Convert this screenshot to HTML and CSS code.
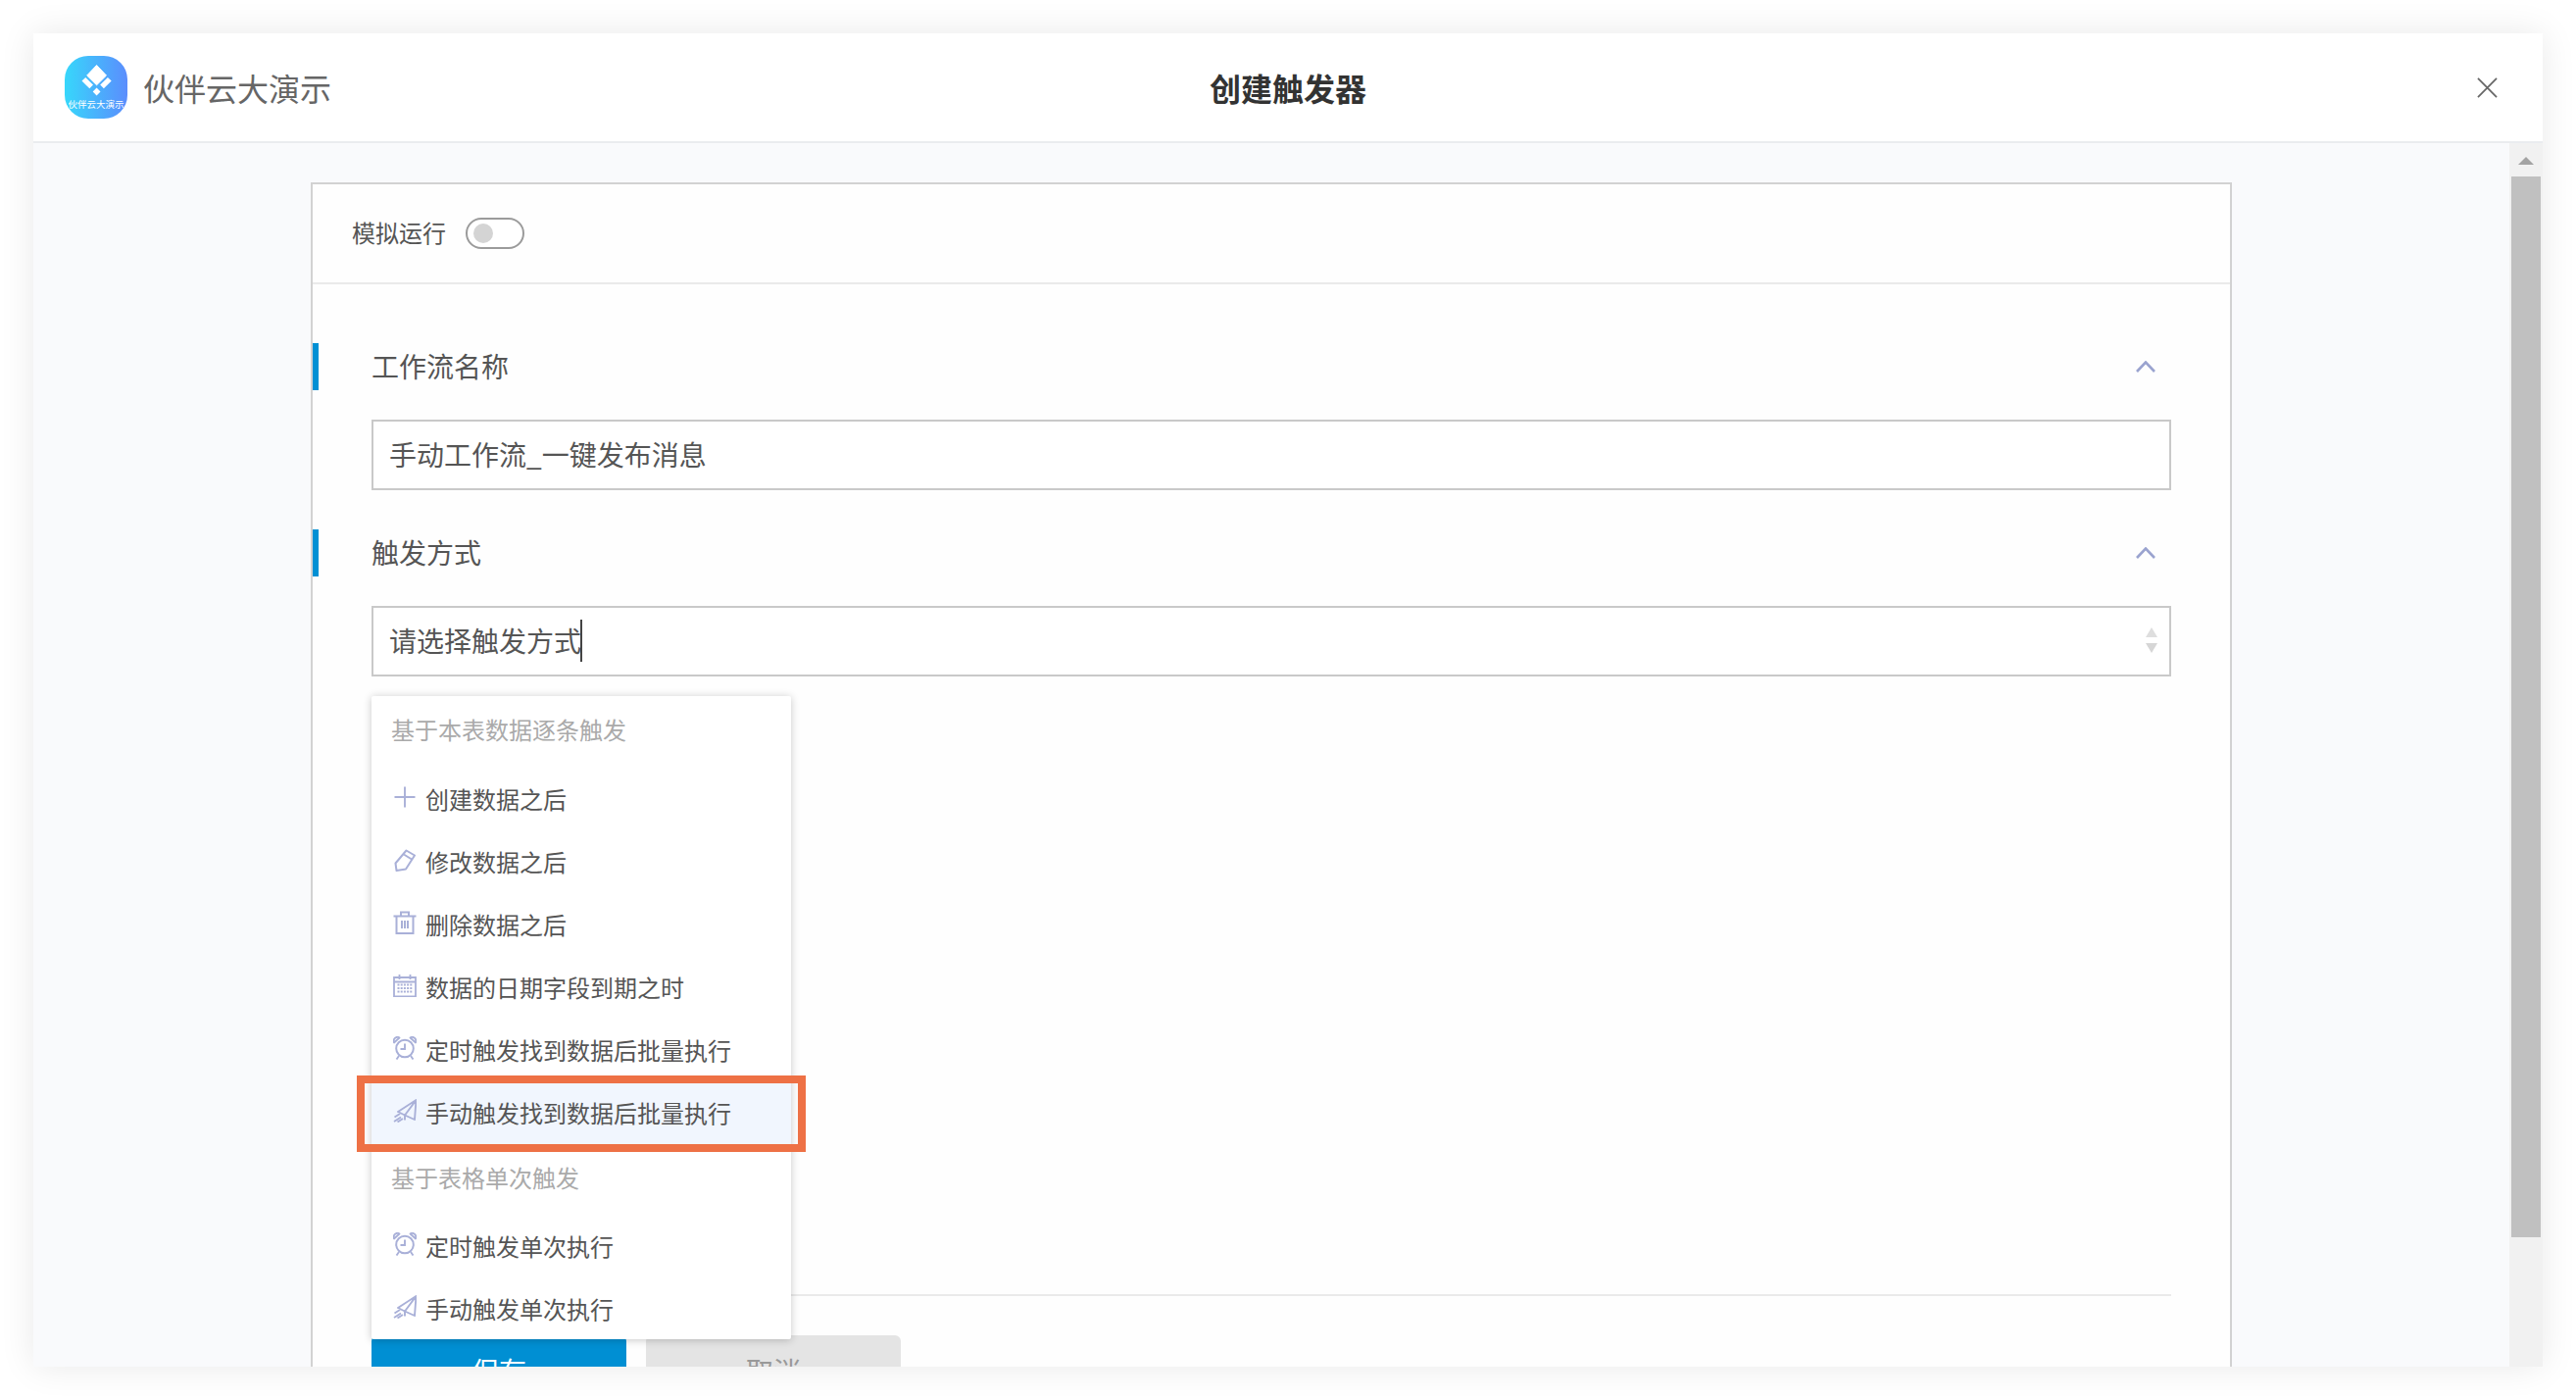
FILE: index.html
```html
<!DOCTYPE html>
<html lang="zh-CN">
<head>
<meta charset="utf-8">
<title>创建触发器</title>
<link rel="stylesheet" href="styles.css">
</head>
<body>
<svg class="defs" width="0" height="0" aria-hidden="true">
  <symbol id="i-plus" viewBox="0 0 24 24"><path d="M12 1.5V22.5M1.5 12H22.5" fill="none" stroke="currentColor" stroke-width="1.9"/></symbol>
  <symbol id="i-edit" viewBox="0 0 24 24"><path d="M13.5 2.5 22 7.5 13 21.5 3.5 23 2.5 15.5ZM11 6.5 19 11.5" fill="none" stroke="currentColor" stroke-width="2" stroke-linejoin="round"/></symbol>
  <symbol id="i-trash" viewBox="0 0 24 24"><path d="M0.5 5.5H23.5M8 5.5V1.5H16V5.5M3.5 5.5V23H20.5V5.5M9 10V18M12 10V18M15 10V18" fill="none" stroke="currentColor" stroke-width="2"/></symbol>
  <symbol id="i-cal" viewBox="0 0 24 24"><path d="M1 4H23V23.5H1ZM1 8.5H23M6.5 1V6M17.5 1V6" fill="none" stroke="currentColor" stroke-width="1.8"/><path d="M4.5 11.5H19.5M4.5 15H19.5M4.5 18.5H19.5" fill="none" stroke="currentColor" stroke-width="2" stroke-dasharray="2 1.2"/></symbol>
  <symbol id="i-clock" viewBox="0 0 24 24"><circle cx="12" cy="12.5" r="8.8" fill="none" stroke="currentColor" stroke-width="2"/><path d="M12 7.5V13H7.5M6 20 3.5 23.5M18 20 20.5 23.5" fill="none" stroke="currentColor" stroke-width="1.9"/><path d="M1 6.5C-0.5 2.5 3.5 -0.5 6.5 1.5ZM23 6.5C24.5 2.5 20.5 -0.5 17.5 1.5Z" fill="none" stroke="currentColor" stroke-width="1.8" stroke-linejoin="round"/></symbol>
  <symbol id="i-plane" viewBox="0 0 24 24"><path d="M23.5 1 5 13 12 16.5 22 21ZM23.5 1 12 16.5 12 21.5M1.5 18.5 7 15M1 23 8 18.5M4.5 23.5 10 20" fill="none" stroke="currentColor" stroke-width="1.9" stroke-linejoin="round"/></symbol>
  <symbol id="i-up" viewBox="0 0 20 12"><path d="M1 11 10 1.5 19 11" fill="none" stroke="currentColor" stroke-width="2.6"/></symbol>
</svg>

<div class="window">
  <header class="topbar">
    <div class="brand">
      <div class="logo">
        <svg class="logo-mark" viewBox="0 0 40 36" aria-hidden="true">
          <path d="M20.6 2.5 30.5 13 20.6 22.8 10.7 13Z" fill="#fff" stroke="#fff" stroke-width="1" stroke-linejoin="round"/>
          <path d="M5.5 18.5 9.3 15 17 22.5 13.3 26.3Z" fill="#fff"/>
          <path d="M35.7 18.5 31.9 15 24.2 22.5 27.9 26.3Z" fill="#fff"/>
          <path d="M20.6 25.5 24.5 29.5 20.6 33.5 16.7 29.5Z" fill="#fff"/>
        </svg>
        <span class="logo-text">伙伴云大演示</span>
      </div>
      <span class="brand-name">伙伴云大演示</span>
    </div>
    <h1 class="page-title">创建触发器</h1>
    <svg class="close" viewBox="0 0 22 22" aria-hidden="true"><path d="M1 1 21 21M21 1 1 21" fill="none" stroke="#666" stroke-width="1.8"/></svg>
  </header>

  <div class="body">
    <main class="content">
      <div class="card">
        <div class="sim-row">
          <span class="sim-label">模拟运行</span>
          <span class="toggle"><span class="knob"></span></span>
        </div>
        <section class="form">
          <div class="section-head">
            <span>工作流名称</span>
            <svg class="chev"><use href="#i-up"/></svg>
          </div>
          <div class="field">手动工作流_一键发布消息</div>

          <div class="section-head second">
            <span>触发方式</span>
            <svg class="chev"><use href="#i-up"/></svg>
          </div>
          <div class="select-wrap">
            <div class="field select">
              <span class="typed">请选择触发方式<i class="caret"></i></span>
              <span class="sort"><i class="tri up"></i><i class="tri down"></i></span>
            </div>
            <div class="menu">
              <div class="group first">基于本表数据逐条触发</div>
              <div class="item"><svg class="ico"><use href="#i-plus"/></svg>创建数据之后</div>
              <div class="item"><svg class="ico"><use href="#i-edit"/></svg>修改数据之后</div>
              <div class="item"><svg class="ico"><use href="#i-trash"/></svg>删除数据之后</div>
              <div class="item"><svg class="ico"><use href="#i-cal"/></svg>数据的日期字段到期之时</div>
              <div class="item"><svg class="ico"><use href="#i-clock"/></svg>定时触发找到数据后批量执行</div>
              <div class="item active"><svg class="ico"><use href="#i-plane"/></svg>手动触发找到数据后批量执行<span class="frame"></span></div>
              <div class="group">基于表格单次触发</div>
              <div class="item"><svg class="ico"><use href="#i-clock"/></svg>定时触发单次执行</div>
              <div class="item"><svg class="ico"><use href="#i-plane"/></svg>手动触发单次执行</div>
            </div>
          </div>
          <hr class="rule">
          <div class="actions">
            <button class="btn primary">保存</button>
            <button class="btn ghost">取消</button>
          </div>
        </section>
      </div>
    </main>
    <aside class="scrollbar">
      <div class="arrow"><i></i></div>
      <div class="thumb"></div>
    </aside>
  </div>
</div>
</body>
</html>
```

FILE: styles.css
```css
* { box-sizing: border-box; }
html, body { margin: 0; height: 100%; }
body {
  padding: 34px;
  background: #fff;
  font-family: "Noto Sans CJK SC", "Noto Sans", sans-serif;
  color: #555;
  overflow: hidden;
}
.defs { position: absolute; }

.window {
  height: 1360px;
  display: flex;
  flex-direction: column;
  background: #fff;
  box-shadow: 0 0 34px rgba(0, 0, 0, 0.09);
}

.topbar {
  flex: none;
  height: 112px;
  padding: 0 32px;
  display: grid;
  grid-template-columns: 1fr auto 1fr;
  align-items: center;
  border-bottom: 2px solid #eaecef;
}
.brand { display: flex; align-items: center; gap: 16px; }
.logo {
  width: 64px;
  height: 64px;
  border-radius: 24px;
  background: linear-gradient(90deg, #37d7fb, #5b8dfd);
  display: flex;
  flex-direction: column;
  align-items: center;
  padding-top: 7px;
  overflow: hidden;
}
.logo-mark { width: 40px; height: 36px; flex: none; }
.logo-text {
  font-size: 9.5px;
  line-height: 12px;
  color: #fff;
  white-space: nowrap;
}
.brand-name { font-size: 32px; line-height: 44px; color: #666; }
.page-title { margin: 0; font-size: 32px; line-height: 44px; font-weight: 700; color: #333; }
.close { width: 21px; height: 21px; justify-self: end; margin-right: 14px; }

.body { flex: 1; min-height: 0; display: flex; background: #f9fafc; }
.content { flex: 1; min-width: 0; overflow: hidden; padding-top: 40px; }

.card {
  width: 1960px;
  margin: 0 auto;
  background: #fefefe;
  border: 2px solid #d2d2d2;
}
.sim-row {
  height: 102px;
  padding: 0 0 1px 40px;
  display: flex;
  align-items: center;
  gap: 20px;
  border-bottom: 2px solid #eaeaea;
}
.sim-label { font-size: 24px; line-height: 34px; color: #555; margin-bottom: 2px; }
.toggle {
  width: 60px;
  height: 32px;
  border: 2px solid #9b9b9b;
  border-radius: 16px;
  display: flex;
  align-items: center;
  padding-left: 6px;
  background: #fff;
}
.knob { width: 20px; height: 20px; border-radius: 50%; background: #d4d4d4; }

.form { padding: 60px 60px 0; }
.section-head {
  position: relative;
  height: 48px;
  padding: 0 16px 3px 0;
  display: flex;
  align-items: center;
  justify-content: space-between;
  font-size: 28px;
  color: #555;
}
.section-head::before {
  content: "";
  position: absolute;
  left: -60px;
  top: 0;
  bottom: 0;
  width: 6px;
  background: #0090d4;
}
.section-head.second { margin-top: 40px; }
.chev { width: 20px; height: 12px; margin-top: 3px; color: #9aa3cf; }

.field {
  margin-top: 30px;
  height: 72px;
  padding: 0 16px 2px;
  border: 2px solid #c9c9c9;
  display: flex;
  align-items: center;
  font-size: 28px;
  color: #555;
  background: #fff;
}
.select-wrap { position: relative; }
.select { justify-content: space-between; padding-right: 12px; }
.typed { display: flex; align-items: center; height: 43px; }
.caret { width: 2px; height: 43px; margin-left: -1px; background: #444; }
.sort { display: flex; flex-direction: column; gap: 6px; }
.tri { width: 0; height: 0; border-left: 6px solid transparent; border-right: 6px solid transparent; }
.tri.up { border-bottom: 10px solid #dedede; }
.tri.down { border-top: 10px solid #d6d6d6; }

.menu {
  position: absolute;
  left: 0;
  top: 92px;
  width: 428px;
  background: #fff;
  box-shadow: 0 1px 8px rgba(0, 0, 0, 0.22);
  border-radius: 2px;
  z-index: 2;
}
.group {
  height: 72px;
  padding: 0 0 8px 20px;
  display: flex;
  align-items: center;
  font-size: 24px;
  color: #aaa;
}
.group.first { height: 74px; }
.item {
  position: relative;
  height: 64px;
  padding: 0 0 4px 22px;
  display: flex;
  align-items: center;
  gap: 9px;
  font-size: 24px;
  color: #555;
}
.item:last-child { height: 62px; padding-bottom: 2px; }
.ico { width: 24px; height: 24px; flex: none; margin-top: -2px; color: #a9b0d8; }
.item.active { background: #f1f6fe; }
.frame {
  position: absolute;
  inset: -7px -15px;
  border: 8px solid #ee7145;
  pointer-events: none;
}

.rule { margin: 630px 0 0; border: 0; height: 2px; background: #eaeaea; }
.actions { display: flex; gap: 20px; margin-top: 40px; }
.btn {
  width: 260px;
  height: 72px;
  border: 0;
  border-radius: 6px;
  font-family: inherit;
  font-size: 28px;
}
.btn.primary { background: #008fd3; color: #fff; }
.btn.ghost { background: #e4e4e4; color: #999; }

.scrollbar { flex: none; width: 34px; padding: 0 2px; background: #f1f1f1; display: flex; flex-direction: column; }
.arrow { height: 34px; flex: none; display: flex; justify-content: center; padding-top: 14px; }
.arrow i { width: 0; height: 0; border-left: 8px solid transparent; border-right: 8px solid transparent; border-bottom: 8px solid #a3a3a3; }
.thumb { height: 1082px; background: #c0c0c0; }
```
